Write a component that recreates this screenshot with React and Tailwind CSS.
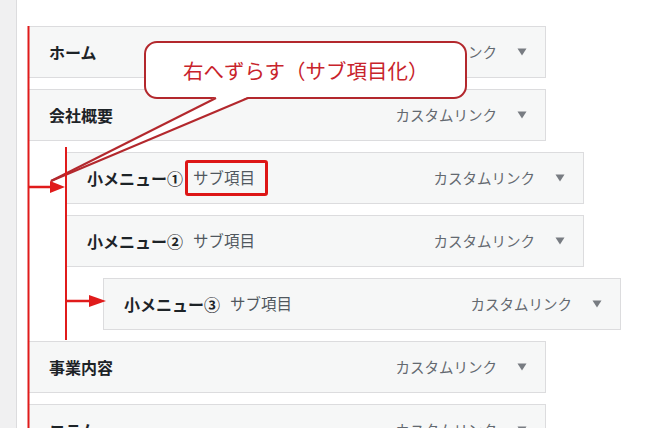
const items = [
  { title: 'ホーム', depth: 0 },
  { title: '会社概要', depth: 0 },
  { title: '小メニュー①', sub: 'サブ項目', depth: 1, mark: true },
  { title: '小メニュー②', sub: 'サブ項目', depth: 1 },
  { title: '小メニュー③', sub: 'サブ項目', depth: 2 },
  { title: '事業内容', depth: 0 },
  { title: 'コラム', depth: 0 },
]

const indent = ['ml-0', 'ml-[38px]', 'ml-[75px]']

function MenuRow({ item }) {
  return (
    <li
      className={`${indent[item.depth]} mb-[11px] flex h-[52px] w-[518px] items-center border border-[#dcdcde] bg-[#f6f7f7] pl-[20px] pr-[18px]`}
    >
      <span className="text-[16px] font-bold text-[#1d2327]">{item.title}</span>
      {item.sub && (
        <span className="relative ml-[10px] text-[15.5px] text-[#50575e]">
          {item.sub}
          {item.mark && (
            <span className="absolute -left-[8px] -right-[13px] -top-[6px] -bottom-[6px] rounded-[3px] border-[3px] border-[#dd1616]" />
          )}
        </span>
      )}
      <span className="ml-auto text-[14.5px] text-[#646970]">カスタムリンク</span>
      <svg className="ml-[20px]" width="10" height="8" viewBox="0 0 10 8">
        <polygon points="0.5,0.5 9.5,0.5 5,7.5" fill="#787c82" />
      </svg>
    </li>
  )
}

export default function App() {
  return (
    <div
      className="relative flex h-[428px] w-[669px] overflow-hidden bg-white"
      style={{ fontFamily: '"Noto Sans CJK JP", "Noto Sans", sans-serif' }}
    >
      <div className="w-[17px] shrink-0 border-r border-[#dcdcde] bg-[#f0f0f1]" />
      <ul className="pl-[11px] pt-[26px]">
        {items.map((it, i) => (
          <MenuRow key={i} item={it} />
        ))}
      </ul>

      {/* annotation: callout bubble */}
      <div className="absolute left-[144px] top-[41px] flex h-[58px] w-[323px] items-center rounded-[13px] border-2 border-[#b3282d] bg-white pl-[37px] text-[20.5px] text-[#c8232b]">
        右へずらす（サブ項目化）
      </div>

      <svg className="pointer-events-none absolute left-0 top-0" width="669" height="428">
        {/* bubble tail */}
        <polygon points="216,97 51,181 248,97" fill="#ffffff" />
        <line x1="216" y1="98" x2="51" y2="181" stroke="#b3282d" strokeWidth="2" />
        <line x1="248" y1="98" x2="51" y2="181" stroke="#b3282d" strokeWidth="2" />

        {/* depth guides */}
        <line x1="28.5" y1="26" x2="28.5" y2="428" stroke="#e01b1b" strokeWidth="2" />
        <line x1="66" y1="147" x2="66" y2="340" stroke="#e01b1b" strokeWidth="2" />

        {/* arrows */}
        <line x1="28" y1="187" x2="52" y2="187" stroke="#e01b1b" strokeWidth="2.5" />
        <polygon points="50,181 65,187 50,193" fill="#e01b1b" />
        <line x1="66" y1="301" x2="90" y2="301" stroke="#e01b1b" strokeWidth="2.5" />
        <polygon points="89,295 106,301 89,307" fill="#e01b1b" />
      </svg>
    </div>
  )
}
